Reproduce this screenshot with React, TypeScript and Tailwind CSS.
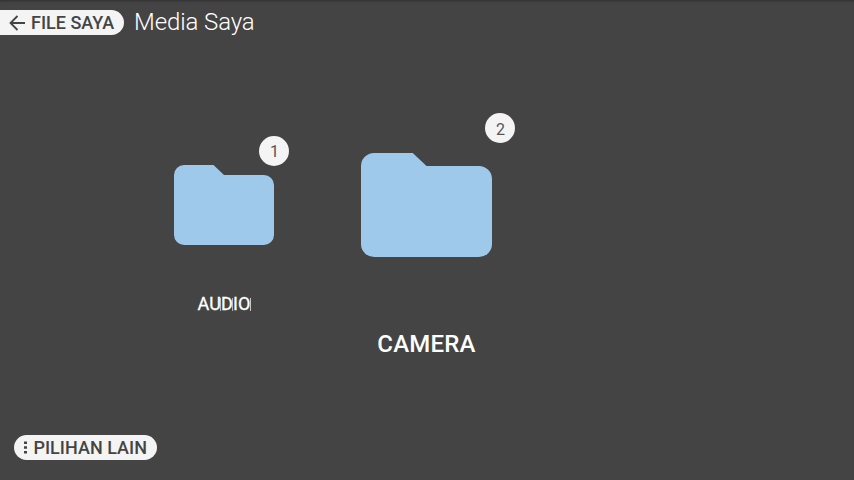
import type { ReactNode } from "react";

function Badge({ count, className }: { count: number; className: string }) {
  return (
    <span
      className={`absolute flex size-[30px] items-center justify-center rounded-full bg-[#f4f4f4] text-base leading-none text-[#555] ${className}`}
    >
      {count}
    </span>
  );
}

function Folder({ className }: { className: string }) {
  return (
    <svg viewBox="0 0 100 80" preserveAspectRatio="none" className={`block ${className}`} fill="#9fc9eb" aria-hidden="true">
      <path d="M10 0H39.5L50 10H90A10 10 0 0 1 100 20V70A10 10 0 0 1 90 80H10A10 10 0 0 1 0 70V10A10 10 0 0 1 10 0Z" />
    </svg>
  );
}

function Pill({ className, children }: { className: string; children: ReactNode }) {
  return (
    <button
      className={`flex h-[25px] items-center bg-[#f4f4f4] text-lg leading-none font-medium whitespace-nowrap text-[#444] ${className}`}
    >
      {children}
    </button>
  );
}

export default function App() {
  return (
    <div className="flex h-[480px] w-[854px] flex-col overflow-hidden border-t border-[#353535] bg-[#444] font-['Roboto',sans-serif] text-white shadow-[inset_0_2px_2px_-1px_#393939]">
      <header className="flex h-[43px] shrink-0 items-center">
        <Pill className="w-[124px] rounded-r-full pl-[9px]">
          <svg viewBox="0 0 16 16" className="mr-[6px] size-4 shrink-0" fill="none" stroke="#444" strokeWidth="1.8" aria-hidden="true">
            <path d="M16 8H1.5M8.5 1L1.5 8L8.5 15" />
          </svg>
          FILE SAYA
        </Pill>
        <h1 className="mb-0.5 ml-[10px] text-2xl leading-none font-light tracking-[-0.1px]">Media Saya</h1>
      </header>

      <main className="flex flex-1 items-start pl-[174px]">
        <section className="mt-[121px] flex w-[100px] flex-col items-center">
          <div className="relative">
            <Folder className="h-20 w-[100px]" />
            <Badge count={1} className="-top-[29px] -right-[15px] pt-0.5 pl-px" />
          </div>
          <div className="relative mt-[49px] text-lg leading-5 font-normal tracking-[0.1px] [-webkit-text-stroke:0.3px_white]">
            AUDIO
            <span className="absolute top-[4px] left-[22px] h-[13px] w-px bg-white/60" />
            <span className="absolute top-[4px] left-[34px] h-[13px] w-px bg-white/60" />
            <span className="absolute top-[4px] left-[52px] h-[13px] w-px bg-white/70" />
          </div>
        </section>
        <section className="mt-[109px] ml-[87px] flex w-[131px] flex-col items-center">
          <div className="relative">
            <Folder className="h-[104px] w-[131px]" />
            <Badge count={2} className="-top-[39.6px] -right-[23px] pt-[3px] pl-px" />
          </div>
          <div className="mt-[73px] text-2xl leading-7 font-medium tracking-[0.2px]">CAMERA</div>
        </section>
      </main>

      <footer className="flex h-[45px] shrink-0 items-start pl-[14px]">
        <Pill className="w-[143px] rounded-full pl-[10px] tracking-[0.02px]">
          <svg viewBox="0 0 3 13" className="mr-[6.5px] h-[13px] w-[3px] shrink-0" fill="#444" aria-hidden="true">
            <path d="M0 0.5h3v2.5H0zM0 5.2h3v2.5H0zM0 10h3v2.5H0z" />
          </svg>
          PILIHAN LAIN
        </Pill>
      </footer>
    </div>
  );
}
